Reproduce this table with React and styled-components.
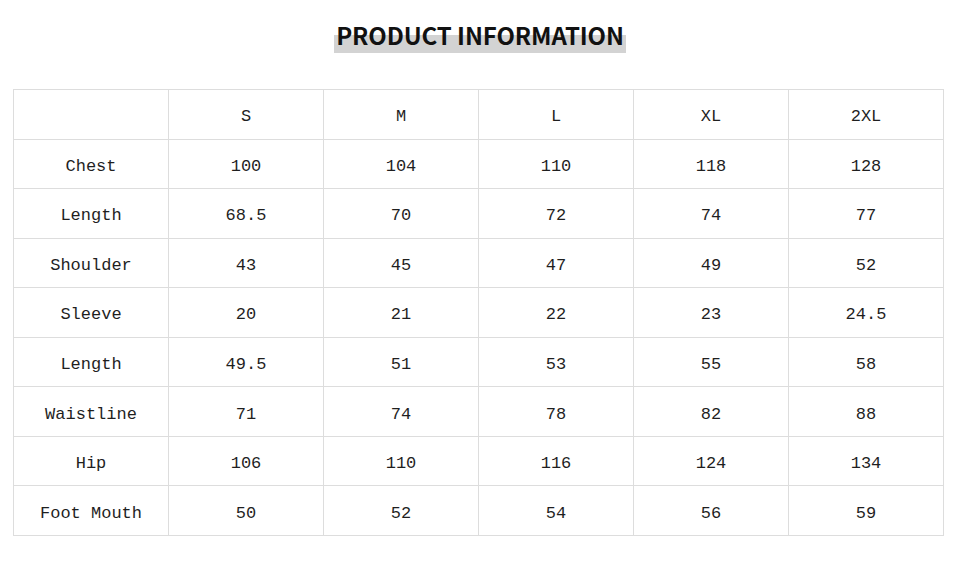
import React from "react";
import styled, { createGlobalStyle } from "styled-components";

const Global = createGlobalStyle`
  html, body { margin: 0; padding: 0; background: #fff; }
  body { width: 960px; height: 566px; overflow: hidden; }
`;

const Page = styled.div`
  display: flex;
  flex-direction: column;
  align-items: flex-start;
  padding: 19px 0 0 13px;
`;

const TitleWrap = styled.div`
  align-self: stretch;
  display: flex;
  justify-content: center;
  padding-right: 13px;
`;

const Title = styled.h1`
  margin: 0;
  padding: 0 2px;
  font-family: "Noto Sans CJK SC", "Noto Sans", sans-serif;
  font-weight: 700;
  font-size: 24px;
  line-height: 32px;
  letter-spacing: -0.1px;
  color: #111;
  background: linear-gradient(to bottom, transparent 0 16px, #d3d3d3 16px 34px);
  padding-bottom: 2px;
`;

const Grid = styled.div`
  margin-top: 36px;
  display: grid;
  grid-template-columns: repeat(6, 155px);
  grid-template-rows: repeat(9, 49.56px);
  border-top: 1px solid #dddddd;
  border-left: 1px solid #dddddd;
  width: max-content;
`;

const Cell = styled.div`
  display: flex;
  align-items: center;
  justify-content: center;
  border-right: 1px solid #dddddd;
  border-bottom: 1px solid #dddddd;
  font-family: "Liberation Mono", "DejaVu Sans Mono", monospace;
  font-size: 17px;
  color: #1f1f1f;
  padding-top: 5px;
  box-sizing: border-box;
`;

const header = ["", "S", "M", "L", "XL", "2XL"];
const rows = [
  ["Chest", "100", "104", "110", "118", "128"],
  ["Length", "68.5", "70", "72", "74", "77"],
  ["Shoulder", "43", "45", "47", "49", "52"],
  ["Sleeve", "20", "21", "22", "23", "24.5"],
  ["Length", "49.5", "51", "53", "55", "58"],
  ["Waistline", "71", "74", "78", "82", "88"],
  ["Hip", "106", "110", "116", "124", "134"],
  ["Foot Mouth", "50", "52", "54", "56", "59"],
];

export default function App() {
  return (
    <>
      <Global />
      <Page>
        <TitleWrap>
          <Title>PRODUCT INFORMATION</Title>
        </TitleWrap>
        <Grid>
          {header.map((h, i) => (
            <Cell key={"h" + i}>{h}</Cell>
          ))}
          {rows.map((r, ri) =>
            r.map((c, ci) => <Cell key={ri + "-" + ci}>{c}</Cell>)
          )}
        </Grid>
      </Page>
    </>
  );
}
